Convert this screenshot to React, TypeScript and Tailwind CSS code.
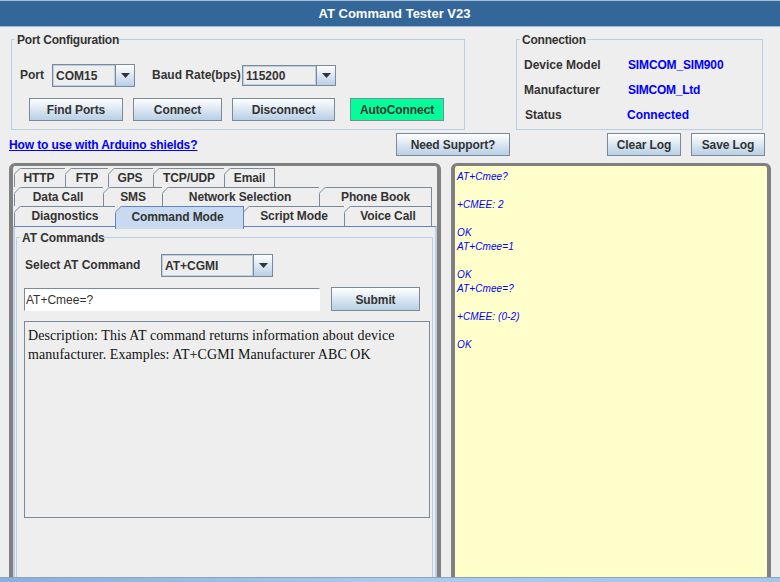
function Btn({ x, y, w, h = 23, label, className = "" }: { x: number; y: number; w: number; h?: number; label: string; className?: string }) {
  return (
    <button
      style={{ left: x, top: y, width: w, height: h }}
      className={`absolute border border-[#7a8a99] bg-gradient-to-b from-[#ffffff] to-[#b8cfe5] text-[12px] font-bold tracking-[-0.1px] text-[#333333] ${className}`}
    >
      {label}
    </button>
  );
}

function Combo({ x, y, w, h, arrow, label }: { x: number; y: number; w: number; h: number; arrow: number; label: string }) {
  return (
    <div style={{ left: x, top: y, width: w, height: h }} className="absolute flex border border-[#7a8a99] bg-[#eeeeee]">
      <div className="flex-1 flex items-center pl-[2px] border border-[#b8cfe5] text-[12px] font-bold text-[#333333] leading-none">{label}</div>
      <div style={{ width: arrow }} className="flex items-center justify-center border-l border-[#7a8a99] bg-gradient-to-b from-[#ffffff] to-[#b8cfe5]">
        <svg width="9" height="5" viewBox="0 0 9 5"><path d="M0 0H9L4.5 5Z" fill="#333333" /></svg>
      </div>
    </div>
  );
}

function Label({ x, y, text, className = "text-[#333333]" }: { x: number; y: number; text: string; className?: string }) {
  return (
    <span style={{ left: x, top: y }} className={`absolute text-[12px] font-bold leading-[14px] whitespace-nowrap ${className}`}>
      {text}
    </span>
  );
}

function Group({ x, y, w, h, legend, legendW }: { x: number; y: number; w: number; h: number; legend: string; legendW: number }) {
  return (
    <>
      <div style={{ left: x, top: y, width: w, height: h }} className="absolute border border-[#b8cfe5]" />
      <span style={{ left: x + 4, top: y - 6, width: legendW }} className="absolute bg-[#eeeeee] pl-[2px] text-[12px] font-bold tracking-[-0.22px] leading-[14px] text-[#333333] whitespace-nowrap">
        {legend}
      </span>
    </>
  );
}

function Tab({ x, y, w, h, label, selected, dx = 0 }: { x: number; y: number; w: number; h: number; label: string; selected?: boolean; dx?: number }) {
  return (
    <div
      style={{ left: x, top: y, width: w, height: h }}
      className={`absolute flex items-center justify-center border-t border-r border-l pb-[1px] text-[12px] font-bold tracking-[-0.1px] text-[#333333] ${selected ? "bg-[#c8daf0] border-[#6382bf] z-10" : "bg-[#eeeeee] border-[#7a8a99]"}`}
    >
      <svg width="7" height="7" viewBox="0 0 7 7" className="absolute -left-px -top-px">
        <path d="M0 0H7L0 7Z" fill="#eeeeee" />
        <path d="M0 6.5L6.5 0" stroke={selected ? "#6382bf" : "#7a8a99"} fill="none" />
      </svg>
      <span className="relative" style={{ left: dx }}>{label}</span>
    </div>
  );
}

const LOG: [number, string][] = [
  [170, "AT+Cmee?"],
  [198, "+CMEE: 2"],
  [226, "OK"],
  [240, "AT+Cmee=1"],
  [268, "OK"],
  [282, "AT+Cmee=?"],
  [310, "+CMEE: (0-2)"],
  [338, "OK"],
];

export default function App() {
  return (
    <div className="relative w-[780px] h-[582px] overflow-hidden bg-[#eeeeee] font-[Liberation_Sans,Arial,sans-serif]">
      {/* Title bar */}
      <div className="absolute left-0 top-0 w-[780px] h-[27px] bg-[#336699] border-t border-[#a9bdd2] border-b border-b-[#9db8d2] flex items-center justify-center">
        <span className="text-[13px] font-bold text-white leading-none ml-[9px]">AT Command Tester V23</span>
      </div>

      {/* Port configuration */}
      <Group x={11} y={39} w={454} h={91} legend="Port Configuration" legendW={104} />
      <Label x={20} y={68} text="Port" />
      <Combo x={52} y={64} w={83} h={23} arrow={19} label="COM15" />
      <Label x={152} y={68} text="Baud Rate(bps)" />
      <Combo x={242} y={65} w={94} h={21} arrow={19} label="115200" />
      <Btn x={29} y={98} w={94} label="Find Ports" />
      <Btn x={133} y={98} w={89} label="Connect" />
      <Btn x={232} y={98} w={103} label="Disconnect" />
      <button className="absolute left-[350px] top-[98px] w-[94px] h-[23px] border border-[#7a8a99] bg-[#00ff99] text-[12px] font-bold tracking-[-0.1px] text-[#333333]">AutoConnect</button>

      {/* Connection */}
      <Group x={516} y={39} w={247} h={91} legend="Connection" legendW={67} />
      <Label x={524} y={58} text="Device Model" />
      <Label x={524} y={83} text="Manufacturer" />
      <Label x={525} y={108} text="Status" />
      <Label x={628} y={58} text="SIMCOM_SIM900" className="text-[#0000ff] tracking-[-0.15px]" />
      <Label x={628} y={83} text="SIMCOM_Ltd" className="text-[#0000ff] tracking-[-0.25px]" />
      <Label x={627} y={108} text="Connected" className="text-[#0000ff]" />

      {/* Action row */}
      <span className="absolute left-[9px] top-[138px] text-[12px] font-bold tracking-[-0.12px] leading-[14px] text-[#0000ff] underline whitespace-nowrap">How to use with Arduino shields?</span>
      <Btn x={396} y={133} w={114} label="Need Support?" />
      <Btn x={607} y={133} w={74} label="Clear Log" />
      <Btn x={691} y={133} w={74} label="Save Log" />

      {/* Left panel */}
      <div className="absolute left-[9px] top-[163px] w-[432px] h-[420px] border-[4px] border-t-[3px] border-[#808080] rounded-t-[6px]" />
      <Tab x={14} y={168} w={52} h={20} label="HTTP" dx={-1} />
      <Tab x={65} y={168} w={44} h={20} label="FTP" />
      <Tab x={108} y={168} w={46} h={20} label="GPS" dx={-1} />
      <Tab x={153} y={168} w={72} h={20} label="TCP/UDP" />
      <Tab x={224} y={168} w={51} h={20} label="Email" />
      <Tab x={14} y={187} w={90} h={20} label="Data Call" dx={-1} />
      <Tab x={103} y={187} w={60} h={20} label="SMS" />
      <Tab x={162} y={187} w={158} h={20} label="Network Selection" dx={-1} />
      <Tab x={319} y={187} w={113} h={20} label="Phone Book" />
      <Tab x={14} y={206} w={102} h={20} label="Diagnostics" />
      <Tab x={115} y={206} w={129} h={22} label="Command Mode" selected dx={-2} />
      <Tab x={243} y={206} w={102} h={20} label="Script Mode" />
      <Tab x={344} y={206} w={88} h={20} label="Voice Call" />

      {/* Tab content */}
      <div className="absolute left-[13px] top-[226px] w-[424px] h-[351px] border-t border-[#6382bf] border-l-2 border-l-[#b8cfe5] border-r-2 border-r-[#b8cfe5]" />
      <div className="absolute left-[115px] top-[226px] w-[129px] h-[3px] bg-[#c8daf0] z-20 border-x border-[#6382bf]" />
      <div className="absolute left-[16px] top-[237px] w-[417px] h-[345px] border-t border-x border-[#b8cfe5]" />
      <span className="absolute left-[20px] top-[231px] w-[84px] pl-[2px] bg-[#eeeeee] text-[12px] font-bold leading-[14px] tracking-[-0.1px] text-[#333333] whitespace-nowrap">AT Commands</span>

      <Label x={25} y={258} text="Select AT Command" />
      <Combo x={161} y={254} w={112} h={23} arrow={19} label="AT+CGMI" />
      <input
        readOnly
        value="AT+Cmee=?"
        className="absolute left-[24px] top-[288px] w-[296px] h-[23px] border border-[#7a8a99] border-b-white border-r-white bg-white px-[1px] text-[12px] text-[#333333] outline-none"
      />
      <Btn x={331} y={287} w={89} h={24} label="Submit" className="pt-[1px]" />

      <div className="absolute left-[24px] top-[321px] w-[406px] h-[197px] border border-[#7a8a99] bg-[#eeeeee] px-[3px] pt-[4px] font-[Liberation_Serif,Times_New_Roman,serif] text-[14px] tracking-[0.07px] leading-[19px] text-[#111111]">
        Description: This AT command returns information about device manufacturer. Examples: AT+CGMI Manufacturer ABC OK
      </div>

      {/* Log panel */}
      <div className="absolute left-[451px] top-[163px] w-[320px] h-[420px] border-[4px] border-t-[3px] border-[#808080] rounded-t-[6px] bg-[#ffffcc]" />
      {LOG.map(([y, t], i) => (
        <span key={i} style={{ top: y }} className="absolute left-[457px] text-[10px] italic leading-[14px] text-[#0000ff] whitespace-nowrap tracking-[0.1px]">
          {t}
        </span>
      ))}

      {/* Bottom strip */}
      <div className="absolute left-0 top-[577px] w-[780px] h-[5px] border-t border-[#8fa3b8] bg-gradient-to-r from-[#86b0dc] via-[#a9cbee] to-[#a3c6ea] z-30" />
    </div>
  );
}
